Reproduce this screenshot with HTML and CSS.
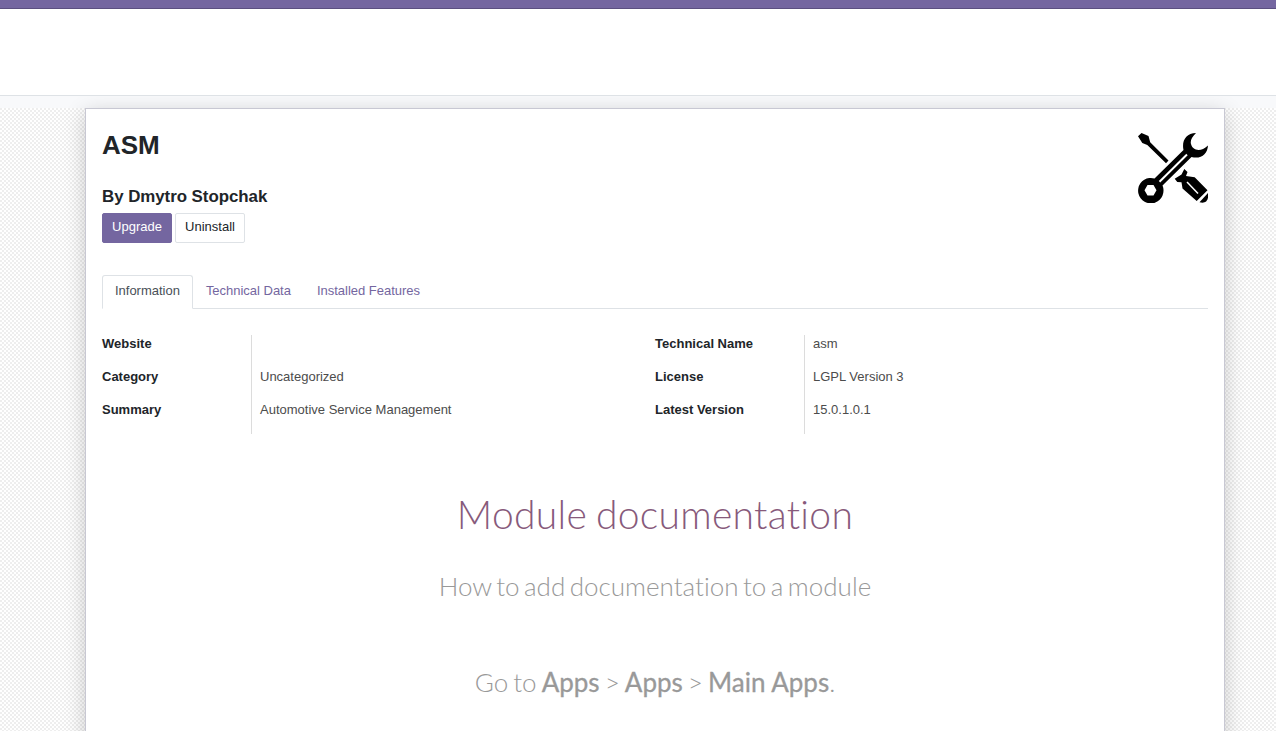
FILE: index.html
```html
<!DOCTYPE html>
<html lang="en">
<head>
<meta charset="utf-8">
<title>ASM</title>
<link rel="stylesheet" href="styles.css">
</head>
<body>
<header class="navbar"></header>
<div class="control-panel"></div>
<main class="content">
  <article class="sheet">
    <div class="sheet-head">
      <div class="module">
        <h1 class="module-name">ASM</h1>
        <h2 class="module-author">By Dmytro Stopchak</h2>
        <div class="actions">
          <button class="btn btn-primary" type="button">Upgrade</button>
          <button class="btn" type="button">Uninstall</button>
        </div>
      </div>
      <svg class="module-icon" viewBox="0 0 70 70" aria-hidden="true">
        <path d="M0 3.300L3.500 0L10.500 3L12.200 9.300L30.500 27.500L28 30.200L9.300 12L4.300 10Z"/>
        <path fill-rule="evenodd" d="M16.500 45.500L45.500 17C43.500 8 48 0 58 0C54 4 52 7.500 53 11C54.500 17 62 20 70 12.500C69.500 21 63 26.500 53.500 24L24.500 52.500C25.400 54.500 25.500 56 25.500 57.500A12.700 12.700 0 1 1 16.500 45.500ZM6.500 57.300L9.500 62.500H15.500L18.500 57.300L15.500 52H9.500Z"/>
        <path d="M36.700 45.800L43.500 41.500L46.300 36L49.500 39L48 43L56.700 44.300L69.500 57.300L58.700 68L44.500 55.500L43.500 49.300L39.300 49Z"/>
        <path d="M70 60C71 67 68 71 61.500 69.200Z"/>
        <path class="slit" d="M21.500 48.700L49 21.500"/>
        <path class="highlight" d="M49 49L60 60.500"/>
      </svg>
    </div>
    <nav class="tabs">
      <a class="tab active">Information</a>
      <a class="tab">Technical Data</a>
      <a class="tab">Installed Features</a>
    </nav>
    <div class="groups">
      <dl class="group">
        <dt>Website</dt><dd></dd>
        <dt>Category</dt><dd>Uncategorized</dd>
        <dt>Summary</dt><dd>Automotive Service Management</dd>
      </dl>
      <dl class="group">
        <dt>Technical Name</dt><dd>asm</dd>
        <dt>License</dt><dd>LGPL Version 3</dd>
        <dt>Latest Version</dt><dd>15.0.1.0.1</dd>
      </dl>
    </div>
    <section class="docs">
      <h2 class="docs-title">Module documentation</h2>
      <h3 class="docs-subtitle">How to add documentation to a module</h3>
      <h3 class="docs-path">Go to <b>Apps</b> &gt; <b>Apps</b> &gt; <b>Main Apps</b>.</h3>
    </section>
  </article>
</main>
</body>
</html>
```
FILE: styles.css
```css
* { box-sizing: border-box; }
body {
  margin: 0;
  height: 731px;
  overflow: hidden;
  display: flex;
  flex-direction: column;
  background: #fff;
  color: #212529;
  font: 13px/19.5px "Liberation Sans", Arial, sans-serif;
}
h1, h2, h3, dl, dd { margin: 0; }
.navbar { flex: none; height: 9px; background: #7466a0; border-bottom: 1px solid #5b4f80; }
.control-panel { flex: none; height: 87px; border-bottom: 1px solid #dee2e6; }
.content {
  flex: 1;
  overflow: hidden;
  padding: 12px 51px 0 85px;
  background:
    linear-gradient(#f8f9fb, #f8f9fb) 0 0 / 100% 12px no-repeat,
    repeating-conic-gradient(#fff 0 25%, #eee 0 50%) 0 0 / 4px 4px;
}
.sheet {
  height: 720px;
  padding: 16px;
  background: #fff;
  border: 1px solid #c8c8d3;
  box-shadow: 0 5px 20px rgba(0, 0, 0, 0.2);
}
.sheet-head { display: flex; justify-content: space-between; height: 150px; }
.module-icon { flex: none; width: 70px; height: 70px; margin-top: 8px; }
.slit { fill: none; stroke: #fff; stroke-width: 2; }
.highlight { fill: none; stroke: #fff; stroke-width: 1.5; }
.module-name { padding-top: 5px; font-size: 26px; line-height: 31px; }
.module-author { margin-top: 26px; font-size: 16.9px; line-height: 20px; letter-spacing: -0.05px; }
.actions { display: flex; gap: 3px; margin-top: 6px; }
.btn {
  width: 70px;
  height: 30px;
  padding: 0 0 3px;
  border: 1px solid #dee2e6;
  border-radius: 2px;
  background: #fff;
  color: #212529;
  font: inherit;
}
.btn-primary { background: #7466a0; border-color: #7466a0; color: #fff; }
.tabs { display: flex; height: 34px; border-bottom: 1px solid #dee2e6; }
.tab { height: 34px; padding: 5px 12px; border: 1px solid transparent; color: #7466a0; letter-spacing: -0.015px; }
.tab.active {
  border-color: #dee2e6 #dee2e6 #fff;
  border-radius: 3px 3px 0 0;
  background: #fff;
  color: #495057;
}
.groups { display: grid; grid-template-columns: 1fr 1fr; margin-top: 26px; }
.group { display: grid; grid-template-columns: 149px 1fr; grid-auto-rows: 33px; line-height: 18px; }
.group dt { font-weight: bold; }
.group dd { padding-left: 8px; border-left: 1px solid #dcdcdc; color: #4c4c4c; }
.docs {
  padding-top: 57px;
  text-align: center;
  font-family: Lato, sans-serif;
  font-variant-ligatures: none;
  color: #999;
}
.docs-title {
  font-size: 39px;
  line-height: 47px;
  font-weight: 300;
  letter-spacing: 0.3px;
  word-spacing: -2px;
  color: #875a7b;
}
.docs-subtitle, .docs-path { font-size: 26px; line-height: 31px; font-weight: 300; word-spacing: -2.6px; }
.docs-subtitle { margin-top: 33px; }
.docs-path { margin-top: 65px; word-spacing: -2px; }
.docs-path b { font-weight: 400; word-spacing: 0; -webkit-text-stroke: 0.3px #999; }
```
